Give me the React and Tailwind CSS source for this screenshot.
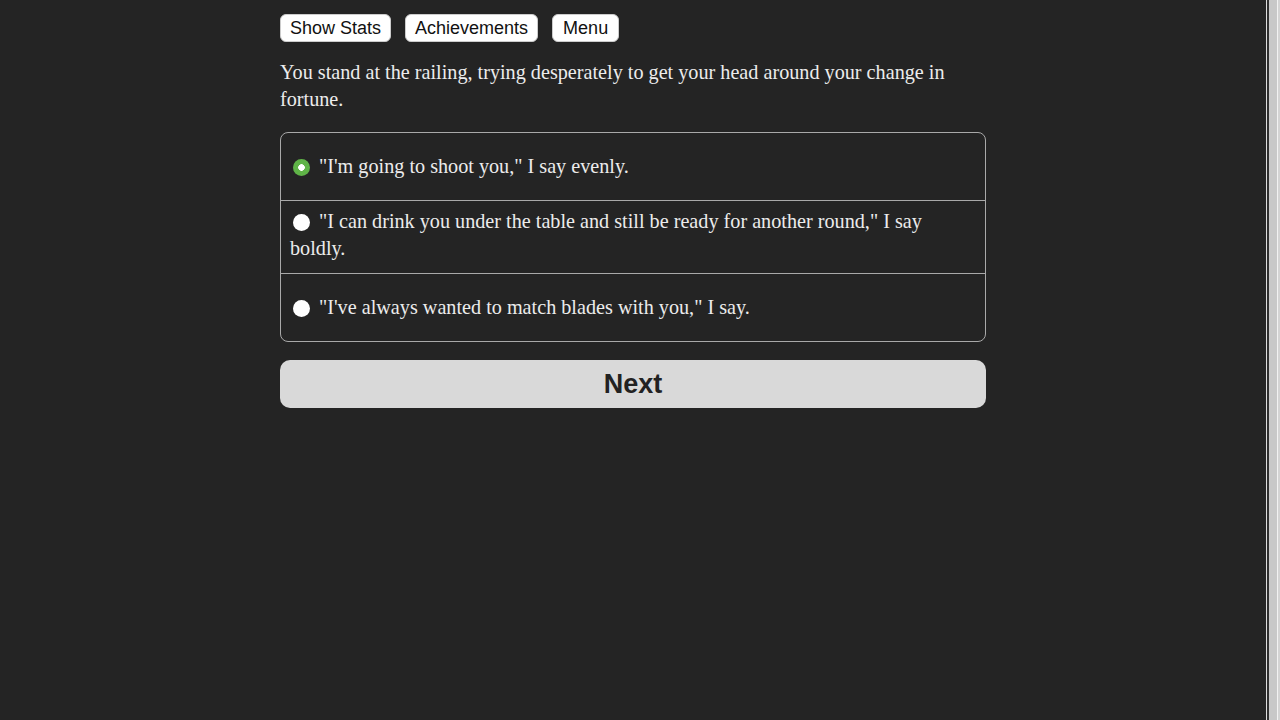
import React, { useState } from "react";

const choices = [
  '"I\'m going to shoot you," I say evenly.',
  '"I can drink you under the table and still be ready for another round," I say boldly.',
  '"I\'ve always wanted to match blades with you," I say.',
];

const rowPad = ["h-[67px] flex items-center", "pt-[7px] pb-[11px]", "h-[68px] flex items-center"];

const Radio = ({ checked }) => (
  <span
    className={`inline-block w-[17px] h-[17px] rounded-full align-[-3px] ml-[3px] mr-[9px] ${
      checked ? "bg-[radial-gradient(circle,#ffffff_0,#ffffff_3px,#5fb347_3.6px)]" : "bg-white"
    }`}
  />
);

const App = () => {
  const [selected, setSelected] = useState(0);

  return (
    <div className="flex min-h-screen bg-[#242424]">
      <div className="flex-1">
        <div className="w-[706px] mx-auto pt-[14px]">
          {/* Top buttons */}
          <div className="flex gap-[14px] font-['Liberation_Sans',Arial,sans-serif] text-[18px] text-[#111]">
            <button className="h-[28px] px-[9px] bg-white rounded-[6px] border border-[#ccc]">Show Stats</button>
            <button className="h-[28px] px-[9px] bg-white rounded-[6px] border border-[#ccc]">Achievements</button>
            <button className="h-[28px] px-[10px] bg-white rounded-[6px] border border-[#ccc]">Menu</button>
          </div>

          {/* Story text */}
          <p className="mt-[17px] font-['Liberation_Serif','Times_New_Roman',serif] text-[20.2px] leading-[27px] text-[#ececec]">
            You stand at the railing, trying desperately to get your head around your change in fortune.
          </p>

          {/* Choices */}
          <div className="mt-[19px] border border-[#a9a9a9] rounded-[8px] font-['Liberation_Serif','Times_New_Roman',serif] text-[20.2px] leading-[27px] text-[#ececec]">
            {choices.map((c, i) => (
              <div
                key={i}
                onClick={() => setSelected(i)}
                className={`${rowPad[i]} pl-[9px] pr-[20px] cursor-pointer ${i > 0 ? "border-t border-[#a9a9a9]" : ""}`}
              >
                <div>
                  <Radio checked={selected === i} />
                  {c}
                </div>
              </div>
            ))}
          </div>

          {/* Next */}
          <button className="mt-[18px] w-full h-[48px] rounded-[10px] bg-[#d9d9d9] font-['Liberation_Sans',Arial,sans-serif] font-bold text-[27px] text-[#222]">
            Next
          </button>
        </div>
      </div>

      {/* scrollbar */}
      <div className="flex w-[14px] shrink-0">
        <div className="w-[1px] bg-[#dcdcdc]" />
        <div className="w-[2px] bg-[#2e2e2e]" />
        <div className="w-[8px] bg-[#c8c8c8]" />
        <div className="w-[1px] bg-[#f2f2f2]" />
        <div className="w-[2px] bg-[#d4d4d4]" />
      </div>
    </div>
  );
};

export default App;
